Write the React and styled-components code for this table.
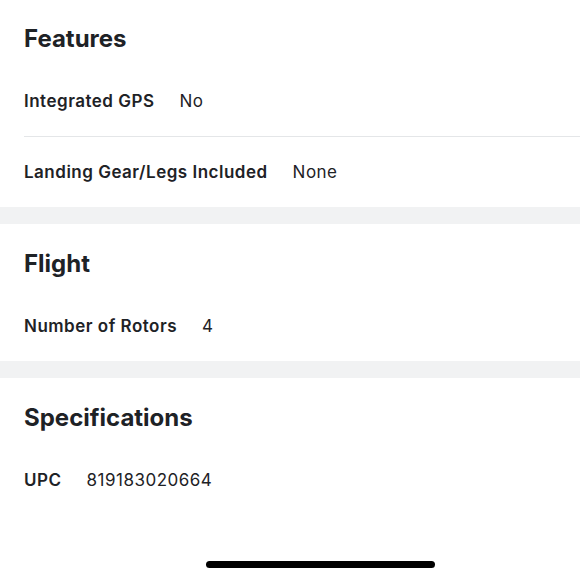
import React from "react";
import styled, { createGlobalStyle } from "styled-components";

const GlobalStyle = createGlobalStyle`
  html, body {
    margin: 0;
    padding: 0;
    background: #ffffff;
  }
  body {
    font-family: Inter, "Liberation Sans", Arial, sans-serif;
    color: #1e2226;
    -webkit-font-smoothing: antialiased;
  }
`;

const Page = styled.div`
  position: relative;
  width: 580px;
  height: 580px;
  overflow: hidden;
  background: #ffffff;
`;

const List = styled.div`
  margin-top: -1px;
`;

const Section = styled.section`
  background: #ffffff;
  padding-left: 24px;
`;

const Band = styled.div`
  height: 17px;
  background: #f1f2f3;
`;

const Heading = styled.h2`
  margin: 0;
  padding: 25px 0 12px;
  font-size: 24px;
  line-height: 30px;
  font-weight: 700;
  letter-spacing: 0;
  color: #1e2226;
`;

const Row = styled.div`
  display: flex;
  align-items: center;
  gap: 25px;
  height: 70px;
  border-top: ${(p) => (p.$divider ? "1px solid #e4e6e8" : "none")};
`;

const Label = styled.span`
  font-size: 17px;
  font-weight: 600;
  letter-spacing: 0.5px;
  color: #1e2226;
`;

const Value = styled.span`
  font-size: 17px;
  font-weight: 400;
  letter-spacing: 0.5px;
  color: #1e2226;
`;

const HomeIndicator = styled.div`
  position: absolute;
  left: 206px;
  top: 561px;
  width: 229px;
  height: 7px;
  border-radius: 4px;
  background: #000000;
`;

const sections = [
  {
    title: "Features",
    rows: [
      ["Integrated GPS", "No"],
      ["Landing Gear/Legs Included", "None"],
    ],
  },
  { title: "Flight", rows: [["Number of Rotors", "4"]] },
  { title: "Specifications", rows: [["UPC", "819183020664"]] },
];

export default function App() {
  return (
    <Page>
      <GlobalStyle />
      <List>
        {sections.map((s, i) => (
          <React.Fragment key={s.title}>
            {i > 0 && <Band />}
            <Section>
              <Heading>{s.title}</Heading>
              {s.rows.map(([label, value], j) => (
                <Row key={label} $divider={j > 0}>
                  <Label>{label}</Label>
                  <Value>{value}</Value>
                </Row>
              ))}
            </Section>
          </React.Fragment>
        ))}
      </List>
      <HomeIndicator />
    </Page>
  );
}
